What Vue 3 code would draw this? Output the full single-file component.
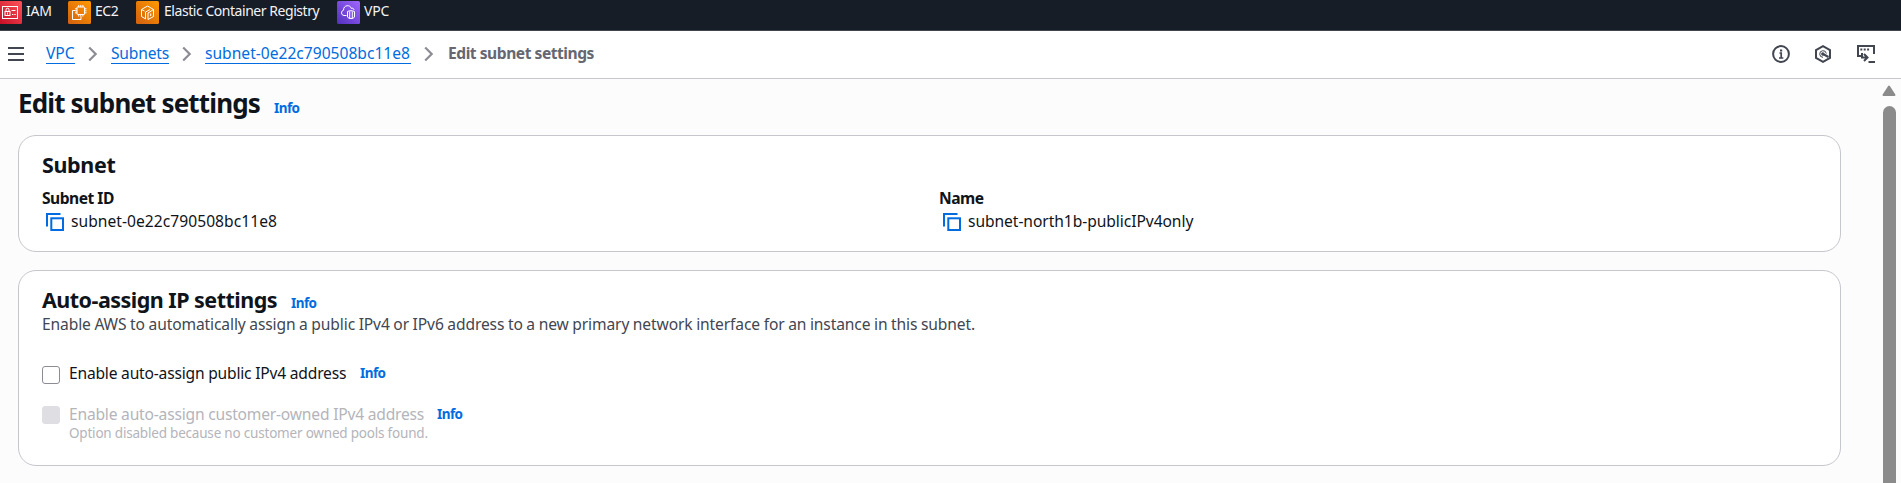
<script setup>
const crumbs = [
  { label: 'VPC', cls: 'c-vpc' },
  { label: 'Subnets', cls: 'c-subnets' },
  { label: 'subnet-0e22c790508bc11e8', cls: 'c-id' },
]
const fields = [
  { label: 'Subnet ID', value: 'subnet-0e22c790508bc11e8', cls: 'f-id' },
  { label: 'Name', value: 'subnet-north1b-publicIPv4only', cls: 'f-name' },
]
</script>

<template>
  <div class="page">
    <header class="favorites">
      <a class="fav iam">
        <svg class="svc" viewBox="0 0 23 23">
          <defs><linearGradient id="gr" x1="0" y1="1" x2="1" y2="0"><stop stop-color="#c20d25" /><stop offset="1" stop-color="#ff5458" /></linearGradient></defs>
          <rect width="23" height="23" rx="1.5" fill="url(#gr)" />
          <g fill="none" stroke="#fff" stroke-width="1"><rect x="3.5" y="5.5" width="15" height="12" /><rect x="6" y="10.5" width="5" height="4" /><path d="M7 10.5V8.7a1.5 1.5 0 0 1 3 0v1.8M8.5 11.5v2M12.5 9.5h4M13 13.5h1.4M15.3 13.5h1.4" /></g>
        </svg>
        <span>IAM</span>
      </a>
      <a class="fav ec2">
        <svg class="svc" viewBox="0 0 23 23">
          <defs><linearGradient id="go" x1="0" y1="1" x2="1" y2="0"><stop stop-color="#d2600e" /><stop offset="1" stop-color="#ff9900" /></linearGradient></defs>
          <rect width="23" height="23" rx="1.5" fill="url(#go)" />
          <g fill="none" stroke="#fff" stroke-width="1"><rect x="9" y="6" width="7.5" height="7.5" rx=".5" /><path d="M10.7 6V4M12.8 6V4M14.9 6V4M10.7 15.5v-2M12.8 15.5v-2M14.9 15.5v-2M9 7.8H7M9 9.8H7M9 11.8H7M16.5 7.8h2M16.5 9.8h2M16.5 11.8h2M7 9.5H4.500v9H13V15.500" /></g>
        </svg>
        <span>EC2</span>
      </a>
      <a class="fav ecr">
        <svg class="svc" viewBox="0 0 23 23">
          <rect width="23" height="23" rx="1.5" fill="url(#go)" />
          <g fill="none" stroke="#fff" stroke-width="1" stroke-linejoin="round"><path d="M9.500 17.800 5.500 15.500V8.500L11.500 5 17.500 8.500v7l-5.500 3V12l5.500-3.500M5.500 8.500 8.500 10M9.500 17.800V11L14 8.500M14.700 12.500v2.500" /></g>
        </svg>
        <span>Elastic Container Registry</span>
      </a>
      <a class="fav vpc">
        <svg class="svc" viewBox="0 0 23 23">
          <defs><linearGradient id="gp" x1="0" y1="1" x2="1" y2="0"><stop stop-color="#5230bd" /><stop offset="1" stop-color="#a166ff" /></linearGradient></defs>
          <rect width="23" height="23" rx="1.5" fill="url(#gp)" />
          <g fill="none" stroke="#fff" stroke-width="1"><path d="M9.500 14.500H7A2.700 2.700 0 0 1 6.500 9.200C6.500 3.500 13.500 3.500 14.400 7.500 15.500 6.700 17 7.500 17 9M10.500 10.500c2-1 5-1 7 0v5.500c-1 2-6 2-7 0zM12.700 10.500v7M15.300 10.500v7" /></g>
        </svg>
        <span>VPC</span>
      </a>
    </header>

    <nav class="bar">
      <svg class="menu" viewBox="0 0 16 14"><path d="M0 1h16M0 7h16M0 13h16" stroke="#424650" stroke-width="2" /></svg>
      <template v-for="c in crumbs" :key="c.label">
        <a class="crumb" :class="c.cls">{{ c.label }}</a>
        <svg class="chev" viewBox="0 0 10 16"><path d="m1.200 1.500 6.500 6.500-6.500 6.500" fill="none" stroke="#8c8c94" stroke-width="2.200" /></svg>
      </template>
      <span class="current">Edit subnet settings</span>
      <div class="tools">
        <svg viewBox="0 0 18 18" class="t1"><circle cx="9" cy="9" r="7.900" fill="none" stroke="#424650" stroke-width="2" /><path d="M7.500 8h1.700v5M7 13h4.300" fill="none" stroke="#424650" stroke-width="1.700" /><rect x="8" y="4.500" width="2.200" height="2" fill="#424650" /></svg>
        <svg viewBox="0 0 18 18" class="t2"><path d="m9 1.200 7 3.900v7.800l-7 3.900-7-3.900V5.100z" fill="none" stroke="#424650" stroke-width="2" /><path d="M12.300 8.500A3.300 3.300 0 1 0 9 12.300" fill="none" stroke="#424650" stroke-width="1" /><circle cx="8.800" cy="9" r="1.700" fill="#424650" /><path d="m9 9 5.500 3" stroke="#424650" stroke-width="2" /></svg>
        <svg viewBox="0 0 18 18" class="t3"><path d="M5 11H1V1h16v8" fill="none" stroke="#424650" stroke-width="2" /><path d="M3.300 4.500h2M6.700 4.500h2M10.100 4.500h2" stroke="#424650" stroke-width="2" /><path d="M5 8v4.500h5M7 9l3.500 3.500L7 16M11.500 17H18" fill="none" stroke="#424650" stroke-width="2" /></svg>
      </div>
    </nav>

    <div class="body">
      <main class="content">
        <div class="heading"><h1>Edit subnet settings</h1><a class="info">Info</a></div>

        <section class="card subnet">
          <h2>Subnet</h2>
          <div class="grid">
            <div v-for="f in fields" :key="f.label" :class="f.cls">
              <div class="label">{{ f.label }}</div>
              <div class="value">
                <svg class="copy" viewBox="0 0 18 18"><path d="M1 13.500V1h13.500" fill="none" stroke="#006ce0" stroke-width="2" /><rect x="5.300" y="5.300" width="11.700" height="11.700" fill="none" stroke="#006ce0" stroke-width="2" /></svg>
                <span>{{ f.value }}</span>
              </div>
            </div>
          </div>
        </section>

        <section class="card assign">
          <div class="subheading"><h2>Auto-assign IP settings</h2><a class="info">Info</a></div>
          <p class="desc">Enable AWS to automatically assign a public IPv4 or IPv6 address to a new primary network interface for an instance in this subnet.</p>
          <div class="option first">
            <span class="box"></span><span class="text">Enable auto-assign public IPv4 address</span><a class="info">Info</a>
          </div>
          <div class="option second">
            <span class="box off"></span><span class="text">Enable auto-assign customer-owned IPv4 address</span><a class="info">Info</a>
          </div>
          <p class="note">Option disabled because no customer owned pools found.</p>
        </section>
      </main>
      <aside class="scroll">
        <svg class="up" viewBox="0 0 14 11"><path d="M7 1.500 12.500 10h-11z" fill="#8b8b8b" stroke="#8b8b8b" stroke-width="2" stroke-linejoin="round" /></svg>
        <div class="thumb"></div>
      </aside>
    </div>
  </div>
</template>

<style>
html, body { margin: 0; overflow: hidden; }
</style>

<style scoped>
.page { width: 1901px; height: 483px; overflow: hidden; display: flex; flex-direction: column; background: #fcfcfd; color: #0f141a; font: 15.6px/22px "Noto Sans", sans-serif; }
.page * { box-sizing: border-box; }
h1, h2, p { margin: 0; white-space: nowrap; }
span, a { white-space: nowrap; }
svg { display: block; flex: none; }
.favorites { height: 31px; flex: none; background: #161d26; border-bottom: 1px solid #424650; display: flex; color: #f3f3f7; font-size: 14px; letter-spacing: -.2px; }
.fav { display: flex; height: 23px; gap: 4px; }
.fav span { line-height: 21px; }
.svc { width: 23px; height: 23px; margin-top: 1px; }
.iam { width: 69px; margin-left: -1px; }
.ec2 { width: 68px; letter-spacing: -.5px; }
.ecr { width: 201px; gap: 5px; letter-spacing: -.45px; }
.bar { height: 48px; flex: none; background: #fff; border-bottom: 1px solid #c6c6cd; display: flex; align-items: flex-start; padding: 11px 26px 0 8px; }
.menu { width: 16px; height: 14px; margin: 5px 22px 0 0; }
.crumb { color: #006ce0; height: 22px; border-bottom: 1px solid #006ce0; }
.c-vpc { width: 29px; }
.c-subnets { width: 58px; letter-spacing: -.2px; }
.c-id { width: 206px; }
.chev { width: 10px; height: 16px; margin: 4px 13px 0 13px; }
.current { font-weight: 700; color: #656871; letter-spacing: -.47px; margin-left: 1px; }
.tools { margin-left: auto; display: flex; gap: 25px; margin-top: 3px; }
.tools svg { width: 18px; height: 18px; }
.t2 { margin-left: -1px; }
.body { flex: 1; display: flex; min-height: 0; }
.content { width: 1823px; margin-left: 18px; }
.heading { height: 56px; display: flex; align-items: baseline; padding-top: 8px; }
h1 { font-size: 26px; line-height: 32px; width: 256px; font-weight: 700; letter-spacing: -.85px; }
.info { color: #006ce0; font-size: 13.5px; font-weight: 700; line-height: 20px; letter-spacing: -.55px; }
.card { background: #fff; border: 1px solid #c6c6cd; border-radius: 18px; padding: 0 23px; }
.subnet { height: 117px; padding-top: 15px; }
h2 { font-size: 21.5px; line-height: 27px; font-weight: 700; letter-spacing: -.52px; }
.subnet h2 { letter-spacing: -.35px; }
.grid { display: grid; grid-template-columns: 897px 1fr; margin-top: 9px; }
.label { font-weight: 700; line-height: 23px; letter-spacing: -.5px; }
.value { display: flex; line-height: 23px; letter-spacing: .04px; }
.f-name .value { letter-spacing: -.06px; }
.copy { width: 18px; height: 18px; margin: 3px 7px 0 4px; }
.assign { height: 196px; margin-top: 18px; padding-top: 15px; }
.subheading { display: flex; align-items: baseline; height: 27px; }
.subheading h2 { width: 249px; }
.desc { color: #424650; letter-spacing: -.12px; word-spacing: -.3px; }
.option { display: flex; align-items: flex-start; height: 23px; }
.box { width: 18px; height: 18px; border: 1px solid #8c8c94; border-radius: 3px; margin: 4px 9px 0 0; }
.text { letter-spacing: -.2px; }
.first { margin-top: 27px; }
.first .text { width: 291px; }
.second { margin-top: 18px; }
.second .text { width: 368px; color: #b4b4bb; }
.option .info { line-height: 23px; }
.off { background: #dedee3; border-color: #dedee3; margin-top: 3px; }
.note { color: #b4b4bb; font-size: 13.5px; line-height: 18px; margin: -2px 0 0 27px; letter-spacing: -.2px; }
.scroll { margin-left: auto; width: 19px; display: flex; flex-direction: column; margin-top: 6px; }
.up { width: 14px; height: 11px; }
.thumb { width: 13px; margin: 10px 0 0 1px; flex: 1; background: #8b8b8b; border-radius: 7px 7px 0 0; }
</style>
